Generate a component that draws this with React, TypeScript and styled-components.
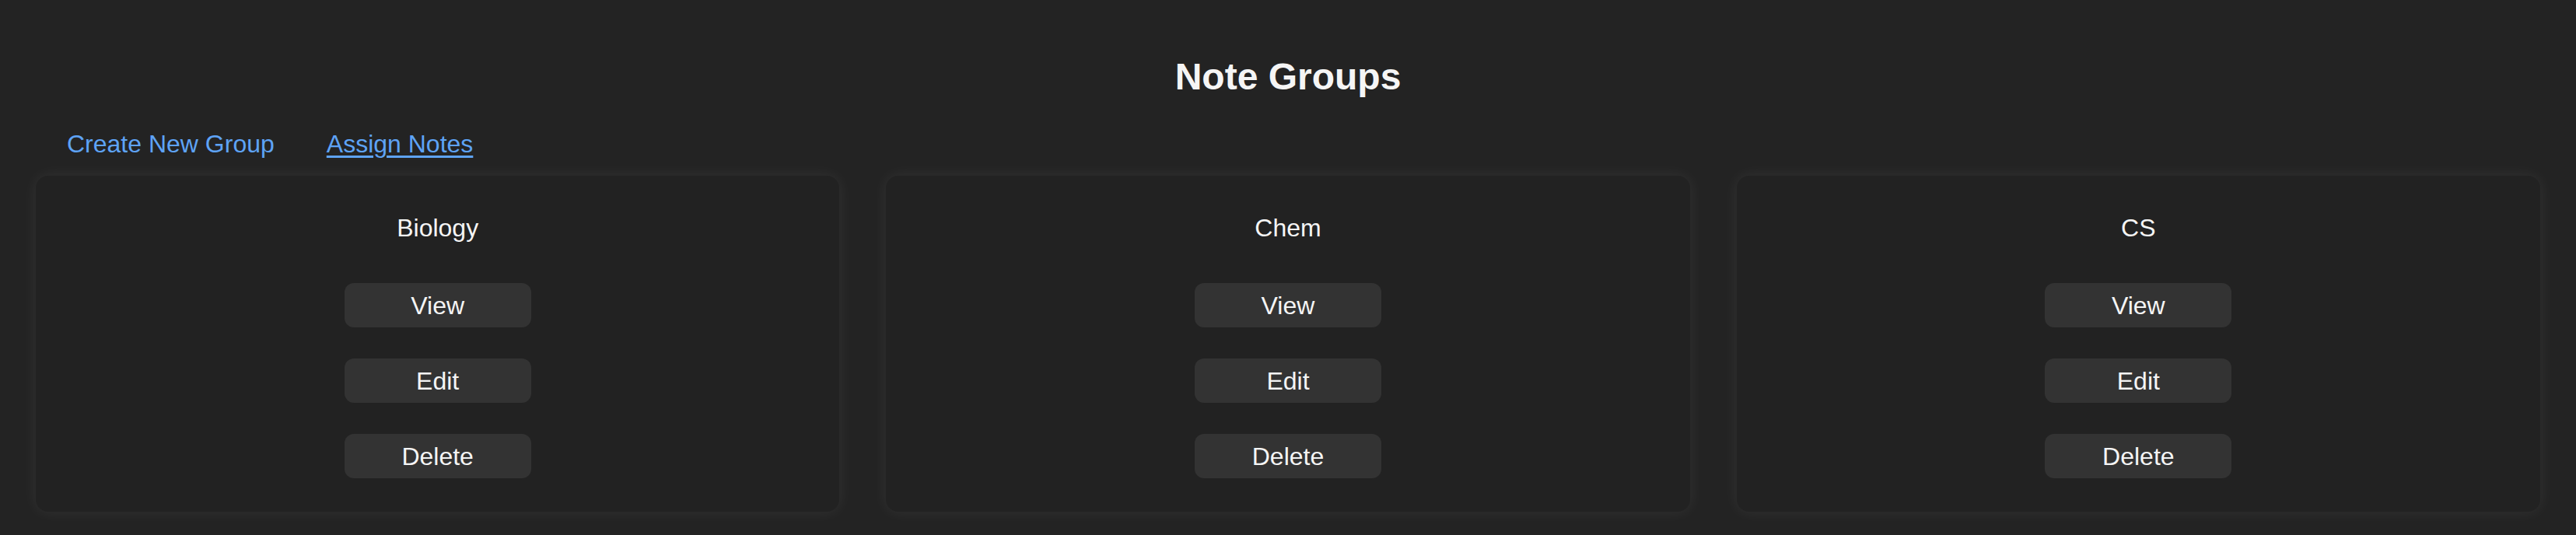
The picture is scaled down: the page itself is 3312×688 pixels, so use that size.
import React from "react";
import styled, { createGlobalStyle } from "styled-components";

const GlobalStyle = createGlobalStyle`
  html, body {
    margin: 0;
    padding: 0;
    background: #232323;
  }
  body {
    font-family: "Liberation Sans", Arial, Helvetica, sans-serif;
    color: #f5f5f5;
  }
`;

const Page = styled.div`
  min-height: 688px;
  box-sizing: border-box;
  padding: 71px 46px 33px;
  display: flex;
  flex-direction: column;
`;

const Title = styled.h1`
  margin: 0;
  font-size: 48px;
  font-weight: 700;
  text-align: center;
  color: #f5f5f5;
  line-height: normal;
`;

const Nav = styled.nav`
  display: flex;
  align-items: center;
  gap: 67px;
  margin: 41px 0 22px;
  padding-left: 40px;
`;

const NavLink = styled.a<{ $underline?: boolean }>`
  font-size: 32px;
  line-height: normal;
  color: #5ea3f6;
  text-decoration: ${(p) => (p.$underline ? "underline" : "none")};
  text-underline-offset: 4px;
  text-decoration-thickness: 3px;
  cursor: pointer;
`;

const Grid = styled.div`
  display: grid;
  grid-template-columns: repeat(3, 1fr);
  gap: 60px;
`;

const Card = styled.div`
  background: #222222;
  border-radius: 16px;
  box-shadow: 0 0 20px rgba(255, 255, 255, 0.07);
  padding: 0 40px 40px;
  display: flex;
  flex-direction: column;
  align-items: center;
  height: 432px;
  box-sizing: border-box;
`;

const CardTitle = styled.h3`
  margin: 49px 0 52px;
  font-size: 32px;
  font-weight: 400;
  line-height: normal;
  color: #f5f5f5;
`;

const Actions = styled.div`
  display: flex;
  flex-direction: column;
  gap: 40px;
`;

const Button = styled.button`
  width: 240px;
  height: 57px;
  border: none;
  border-radius: 12px;
  background: #333333;
  color: #f5f5f5;
  font-family: "Liberation Sans", Arial, Helvetica, sans-serif;
  font-size: 32px;
  line-height: 1;
  cursor: pointer;
  padding: 0;
`;

const groups = ["Biology", "Chem", "CS"];

export default function App() {
  return (
    <>
      <GlobalStyle />
      <Page>
        <Title>Note Groups</Title>
        <Nav>
          <NavLink>Create New Group</NavLink>
          <NavLink $underline>Assign Notes</NavLink>
        </Nav>
        <Grid>
          {groups.map((g) => (
            <Card key={g}>
              <CardTitle>{g}</CardTitle>
              <Actions>
                <Button>View</Button>
                <Button>Edit</Button>
                <Button>Delete</Button>
              </Actions>
            </Card>
          ))}
        </Grid>
      </Page>
    </>
  );
}
